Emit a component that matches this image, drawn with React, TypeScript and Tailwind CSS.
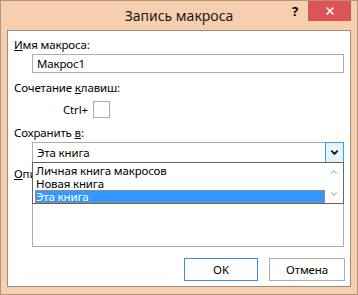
import { ChevronDown, ChevronUp, X } from 'lucide-react'

const font = { fontFamily: '"Noto Sans", "Liberation Sans", sans-serif' }

export default function App() {
  return (
    <div style={font} className="w-[358px] h-[295px] bg-[#f6cfae] border border-[#b8947a] flex flex-col text-[11.5px] tracking-[-0.15px] text-black leading-[16px]">
      {/* title bar */}
      <div className="h-[29px] flex items-start relative shrink-0">
        <div className="flex-1 text-center text-[14px] tracking-normal leading-[20px] pt-[5px] text-[#1a1a1a]">Запись макроса</div>
        <div className="absolute right-[6px] top-0 flex items-start">
          <div className="w-[20px] h-[20px] flex items-center justify-center text-[13px] font-bold mr-[3px]">?</div>
          <div className="w-[43px] h-[20px] bg-[#dc5454] flex items-center justify-center">
            <X size={12} strokeWidth={3} color="white" />
          </div>
        </div>
      </div>

      {/* client area */}
      <div className="mx-[6px] mb-[7px] flex-1 bg-white border border-[#9b8a7e] flex flex-col pl-[6px] pr-[6px] pt-[6px]">
        <div>
          <u>И</u>мя макроса:
        </div>
        <div className="ml-[18px] mt-[1px] h-[19px] border border-[#abadb3] flex items-center px-[4px]">Макрос1</div>

        <div className="mt-[7px]">
          Сочетание <u>к</u>лавиш:
        </div>
        <div className="flex items-center mt-[5px] ml-[49px]">
          <span className="mr-[5px]">Ctrl+</span>
          <div className="w-[17px] h-[17px] border border-[#abadb3]" />
        </div>

        <div className="mt-[7px]">
          Сохранить <u>в</u>:
        </div>
        <div className="ml-[18px] mt-[1px] relative">
          <div className="h-[21px] border border-[#abadb3] flex items-center">
            <span className="flex-1 px-[4px]">Эта книга</span>
            <div className="w-[19px] h-[21px] -mr-px -my-px border border-[#3c9ef0] bg-[#e5f3fd] flex items-center justify-center">
              <ChevronDown size={11} strokeWidth={4} color="#111" />
            </div>
          </div>
          {/* open dropdown */}
          <div className="absolute left-0 right-0 top-[20px] h-[42px] z-10 bg-white border border-[#646464] flex">
            <div className="flex-1 flex flex-col leading-[13px] pt-px pl-[2px]">
              <div className="h-[13px] pl-px">Личная книга макросов</div>
              <div className="h-[13px] pl-px">Новая книга</div>
              <div className="h-[13px] bg-[#3399ff] text-white border border-dotted border-[#e8772e] leading-[11px]">Эта книга</div>
            </div>
            <div className="w-[18px] flex flex-col items-center justify-between py-[4px]">
              <ChevronUp size={10} strokeWidth={3} color="#c2c2c2" />
              <ChevronDown size={10} strokeWidth={3} color="#c2c2c2" />
            </div>
          </div>
        </div>

        <div className="mt-[3px]">
          <u>О</u>писание:
        </div>
        <div className="ml-[18px] mt-[1px] h-[64px] border border-[#abadb3]" />

        <div className="flex justify-end gap-[11px] mt-[11px] mr-[-1px]">
          <div className="w-[74px] h-[23px] border border-[#3c8fe6] bg-white flex items-center justify-center">OK</div>
          <div className="w-[76px] h-[23px] border border-[#adadad] bg-white flex items-center justify-center">Отмена</div>
        </div>
      </div>
    </div>
  )
}
